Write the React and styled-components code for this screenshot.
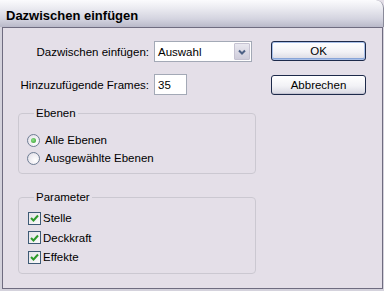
import React from 'react';
import styled, { createGlobalStyle } from 'styled-components';

const Global = createGlobalStyle`
  html, body { margin: 0; padding: 0; background: #e4dfe8; }
  body { font-family: "Liberation Sans", Arial, sans-serif; font-size: 11.5px; color: #000; }
  * { box-sizing: border-box; }
`;

const Window = styled.div`
  width: 384px;
  height: 291px;
  display: flex;
  flex-direction: column;
  padding: 0 1px 2px 2px;
  background: #d4d2dc;
  border-top-right-radius: 8px;
  overflow: hidden;
`;

const TitleBar = styled.div`
  height: 27px;
  flex: none;
  margin: 0 -1px 0 -2px;
  padding: 3px 0 0 6px;
  display: flex;
  align-items: center;
  font-weight: bold;
  font-size: 13px;
  color: #000;
  background: linear-gradient(#fbfbfd 0%, #eeeef3 25%, #d4d4e0 70%, #b9b9c9 100%);
  border-top-right-radius: 8px;
  border-right: 1px solid #8a8a9a;
`;

const Client = styled.div`
  flex: 1;
  border: 1px solid #6f6c80;
  background: #e4dfe8;
  display: flex;
  padding: 13px 0 0 14px;
`;

const LeftCol = styled.div`
  width: 238px;
  display: flex;
  flex-direction: column;
`;

const FormGrid = styled.div`
  display: grid;
  grid-template-columns: 133px 98px;
  column-gap: 5px;
  row-gap: 12px;
  align-items: center;
  margin-left: -1px;
`;

const Label = styled.label`
  text-align: right;
  white-space: nowrap;
`;

const Field = styled.div`
  height: 21px;
  width: ${p => p.$w}px;
  border: 1px solid #a3a9b6;
  background: #fff;
  display: flex;
  align-items: center;
  padding-left: 3px;
`;

const FieldText = styled.span`
  flex: 1;
`;

const ArrowBtn = styled.div`
  width: 16px;
  height: 17px;
  margin-right: 1px;
  border: 1px solid #c6c3d2;
  border-radius: 1px;
  background: linear-gradient(#e9e8f0, #cfcddb);
  display: flex;
  align-items: center;
  justify-content: center;
`;

const Group = styled.fieldset`
  margin: ${p => p.$top}px 0 0 1px;
  padding: ${p => p.$pt}px 0 ${p => p.$pb}px 8px;
  width: 238px;
  border: 1px solid #cbc8d1;
  border-radius: 4px;
  display: flex;
  flex-direction: column;
  gap: ${p => p.$gap}px;
`;

const Legend = styled.legend`
  padding: 0 2px;
  margin-left: 7px;
  line-height: 14px;
`;

const Option = styled.div`
  display: flex;
  align-items: center;
  gap: ${p => p.$gap}px;
  height: 18px;
`;

const Radio = styled.span`
  width: 13px;
  height: 13px;
  border-radius: 50%;
  border: 1px solid #6e7d94;
  background: radial-gradient(circle at 65% 65%, #fff 0%, #eceaf0 60%, #d6d4dd 100%);
  display: flex;
  align-items: center;
  justify-content: center;
  &::after {
    content: '';
    display: ${p => (p.$on ? 'block' : 'none')};
    width: 5px;
    height: 5px;
    border-radius: 50%;
    background: radial-gradient(circle at 40% 40%, #8fe08a, #2e9a2a);
  }
`;

const Check = styled.span`
  width: 13px;
  height: 13px;
  margin-left: 1px;
  border: 1px solid #3d5a75;
  background: linear-gradient(135deg, #e4e3e8, #fbfbfb);
  display: flex;
  align-items: center;
  justify-content: center;
`;

const RightCol = styled.div`
  margin-left: 16px;
  display: flex;
  flex-direction: column;
  gap: 14px;
`;

const Button = styled.button`
  width: 95px;
  height: 20px;
  font: inherit;
  color: #000;
  padding: 0;
  border: 1px solid #1d2a4a;
  border-radius: 3px;
  background: linear-gradient(#ffffff 0%, #f2f2f6 55%, #d8d8e2 100%);
  box-shadow: ${p => (p.$default ? 'inset 0 0 0 1px #a9c0e8, inset 0 -1px 0 1px #88a5d8' : 'inset 0 -1px 0 #c4c4d2')};
`;

const Chevron = () => (
  <svg width="8" height="6" viewBox="0 0 8 6">
    <path d="M1 1.5 L4 4.5 L7 1.5" fill="none" stroke="#4d6185" strokeWidth="2" />
  </svg>
);

const Tick = () => (
  <svg width="9" height="8" viewBox="0 0 9 8">
    <path d="M1 4 L3.5 6.5 L8 1.5" fill="none" stroke="#2d9a2a" strokeWidth="2" />
  </svg>
);

export default function App() {
  return (
    <>
      <Global />
      <Window>
        <TitleBar>Dazwischen einfügen</TitleBar>
        <Client>
          <LeftCol>
            <FormGrid>
              <Label>Dazwischen einfügen:</Label>
              <Field $w={98}>
                <FieldText>Auswahl</FieldText>
                <ArrowBtn><Chevron /></ArrowBtn>
              </Field>
              <Label>Hinzuzufügende Frames:</Label>
              <Field $w={33}>35</Field>
            </FormGrid>
            <Group $top={11} $gap={0} $pt={11} $pb={6}>
              <Legend>Ebenen</Legend>
              <Option $gap={5}><Radio $on />Alle Ebenen</Option>
              <Option $gap={5}><Radio />Ausgewählte Ebenen</Option>
            </Group>
            <Group $top={16} $gap={1.5} $pt={5} $pb={7}>
              <Legend>Parameter</Legend>
              <Option $gap={2}><Check><Tick /></Check>Stelle</Option>
              <Option $gap={2}><Check><Tick /></Check>Deckkraft</Option>
              <Option $gap={2}><Check><Tick /></Check>Effekte</Option>
            </Group>
          </LeftCol>
          <RightCol>
            <Button $default>OK</Button>
            <Button>Abbrechen</Button>
          </RightCol>
        </Client>
      </Window>
    </>
  );
}
